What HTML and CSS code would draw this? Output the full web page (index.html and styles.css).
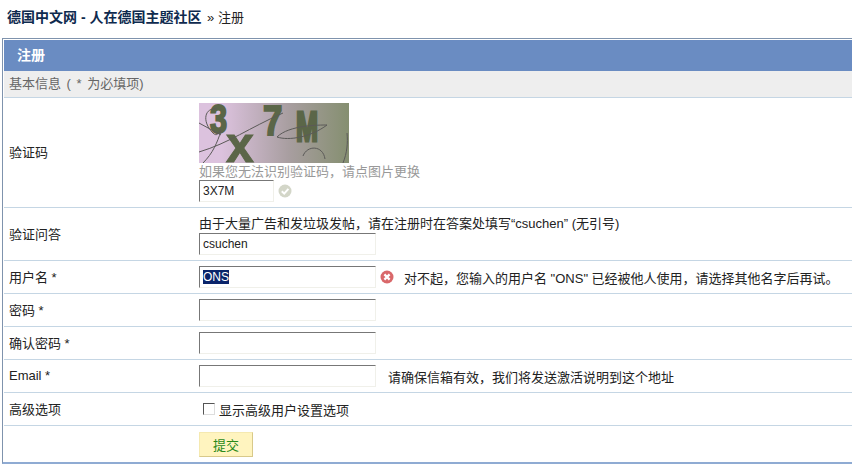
FILE: index.html
```html
<!DOCTYPE html>
<html lang="zh-CN">
<head>
    <meta charset="UTF-8">
    <title>注册</title>
    <link rel="stylesheet" href="styles.css">
</head>
<body>
    <div class="nav"><a href="#">德国中文网 - 人在德国主题社区</a> » 注册</div>
    <div class="box">
        <h1>注册</h1>
        <div class="section">基本信息 ( * 为必填项)</div>

        <div class="row row-captcha">
            <div class="label">验证码</div>
            <div class="field">
                <svg class="captcha" width="150" height="60" viewBox="0 0 150 60">
                    <defs>
                        <linearGradient id="captcha-bg">
                            <stop offset="0.15" stop-color="#dcc2de"/>
                            <stop offset="0.6" stop-color="#a89ea0"/>
                            <stop offset="1" stop-color="#858f70"/>
                        </linearGradient>
                    </defs>
                    <rect width="150" height="60" fill="url(#captcha-bg)"/>
                    <g fill="#5b6648" stroke="#5b6648" font-family="Liberation Sans, sans-serif" font-weight="bold">
                        <text transform="translate(11 30) scale(.77 1)" font-size="40" stroke-width="2">3</text>
                        <text x="27" y="59" font-size="50" stroke-width="1">x</text>
                        <text transform="translate(64 32) scale(.83 1)" font-size="42" stroke-width="2">7</text>
                        <text transform="translate(97 38) scale(.63 1)" font-size="42" stroke-width="3">M</text>
                    </g>
                    <g fill="none" stroke="#5b5a58" stroke-width="1">
                        <path d="M0 20 L22 32 M0 49 C30 40 50 25 84 10"/>
                        <path d="M18 6 C6 4 2 18 14 30 C18 34 20 30 22 26"/>
                        <path d="M22 28 C18 40 14 50 4 60"/>
                        <path d="M78 34 C90 22 120 22 128 22 C112 34 90 38 78 34 Z"/>
                        <path d="M104 53 C108 42 124 42 126 56"/>
                        <path d="M148 30 C149 40 148 50 144 60"/>
                    </g>
                </svg>
                <div class="hint">如果您无法识别验证码，请点图片更换</div>
                <div class="inline">
                    <input class="input input-short" type="text" value="3X7M">
                    <svg class="status" width="14" height="14" viewBox="0 0 14 14">
                        <circle cx="7" cy="7" r="6.5" fill="#d3d6c8"/>
                        <path d="M3.8 7.2 L6.2 9.6 L10.4 4.8" fill="none" stroke="#fff" stroke-width="2"/>
                    </svg>
                </div>
            </div>
        </div>

        <div class="row row-question">
            <div class="label">验证问答</div>
            <div class="field">
                <div class="question">由于大量广告和发垃圾发帖，请在注册时在答案处填写“csuchen” (无引号)</div>
                <input class="input" type="text" value="csuchen">
            </div>
        </div>

        <div class="row">
            <div class="label">用户名 *</div>
            <div class="field inline">
                <div class="input input-selected"><span>ONS</span></div>
                <svg class="status" width="14" height="14" viewBox="0 0 14 14">
                    <circle cx="7" cy="7" r="6.5" fill="#d9686a"/>
                    <path d="M4.4 4.4 L9.6 9.6 M9.6 4.4 L4.4 9.6" stroke="#fff" stroke-width="2.2"/>
                </svg>
                <span class="message">对不起，您输入的用户名 "ONS" 已经被他人使用，请选择其他名字后再试。</span>
            </div>
        </div>

        <div class="row">
            <div class="label">密码 *</div>
            <div class="field inline"><input class="input" type="password"></div>
        </div>

        <div class="row">
            <div class="label">确认密码 *</div>
            <div class="field inline"><input class="input" type="password"></div>
        </div>

        <div class="row">
            <div class="label">Email *</div>
            <div class="field inline">
                <input class="input" type="text">
                <span class="email-note">请确保信箱有效，我们将发送激活说明到这个地址</span>
            </div>
        </div>

        <div class="row">
            <div class="label">高级选项</div>
            <div class="field inline">
                <label class="check"><span class="checkbox"></span>显示高级用户设置选项</label>
            </div>
        </div>

        <div class="row row-submit">
            <div class="label"></div>
            <div class="field inline"><button class="submit" type="button">提交</button></div>
        </div>
    </div>
</body>
</html>
```

FILE: styles.css
```css
* {
    margin: 0;
    padding: 0;
    box-sizing: border-box;
}

body {
    font-family: "Liberation Sans", "Noto Sans CJK SC", sans-serif;
    font-size: 13px;
    color: #222;
    background: #fff;
    overflow: hidden;
}

.nav {
    height: 38px;
    padding: 9px 0 0 7px;
    line-height: 16px;
}

.nav a {
    margin-right: 2px;
    font-size: 14px;
    color: #0e2a4e;
    font-weight: bold;
    text-decoration: none;
}

.box {
    margin-left: 2px;
    height: 426px;
    border: 1px solid #7f93ad;
    border-right: none;
    border-bottom: 2px solid #8fabd3;
    padding: 1px 0 0 1px;
}

h1 {
    height: 31px;
    line-height: 30px;
    padding-left: 13px;
    font-size: 14px;
    color: #fff;
    background: #6a8cc2;
}

.section {
    height: 27px;
    line-height: 26px;
    padding-left: 5px;
    word-spacing: 2px;
    color: #666;
    background: #eeeeee;
    border-bottom: 1px solid #c5d6e4;
}

.row {
    display: flex;
    align-items: center;
    height: 33px;
    border-bottom: 1px solid #c5d6e4;
}

.row-captcha {
    height: 110px;
}

.row-question {
    height: 53px;
}

.row-submit {
    height: 37px;
    border-bottom: none;
}

.label {
    width: 195px;
    padding: 0 0 2px 5px;
    flex-shrink: 0;
}

.field {
    flex: 1;
}

.inline {
    display: flex;
    align-items: center;
}

.captcha {
    display: block;
}

.hint {
    color: #999;
    line-height: 17px;
}

.input {
    display: block;
    width: 177px;
    height: 22px;
    padding: 1px 3px;
    font: 12px "Liberation Sans", "Noto Sans CJK SC", sans-serif;
    color: #222;
    background: #fff;
    border: 1px solid #f0f0ea;
    border-top-color: #777;
    border-left-color: #777;
    outline: none;
}

.input-short {
    width: 75px;
}

.input-selected {
    line-height: 18px;
}

.input-selected span {
    display: inline-block;
    color: #fff;
    background: #0a246a;
    line-height: 14px;
}

.question {
    line-height: 19px;
}

.status {
    margin-left: 4px;
}

.message {
    margin-left: 10px;
    white-space: nowrap;
}

.email-note {
    margin-left: 12px;
}

.check {
    display: flex;
    align-items: center;
    margin-left: 4px;
}

.checkbox {
    width: 12px;
    height: 12px;
    margin-right: 4px;
    background: #fff;
    border: 1px solid #ddd;
    border-top-color: #555;
    border-left-color: #555;
}

.submit {
    width: 54px;
    height: 25px;
    font: 13px "Liberation Sans", "Noto Sans CJK SC", sans-serif;
    color: #2a8a1a;
    background: #fff4bf;
    border: 1px solid #f5e9b0;
    border-right-color: #d8c98a;
    border-bottom-color: #d8c98a;
}
```
